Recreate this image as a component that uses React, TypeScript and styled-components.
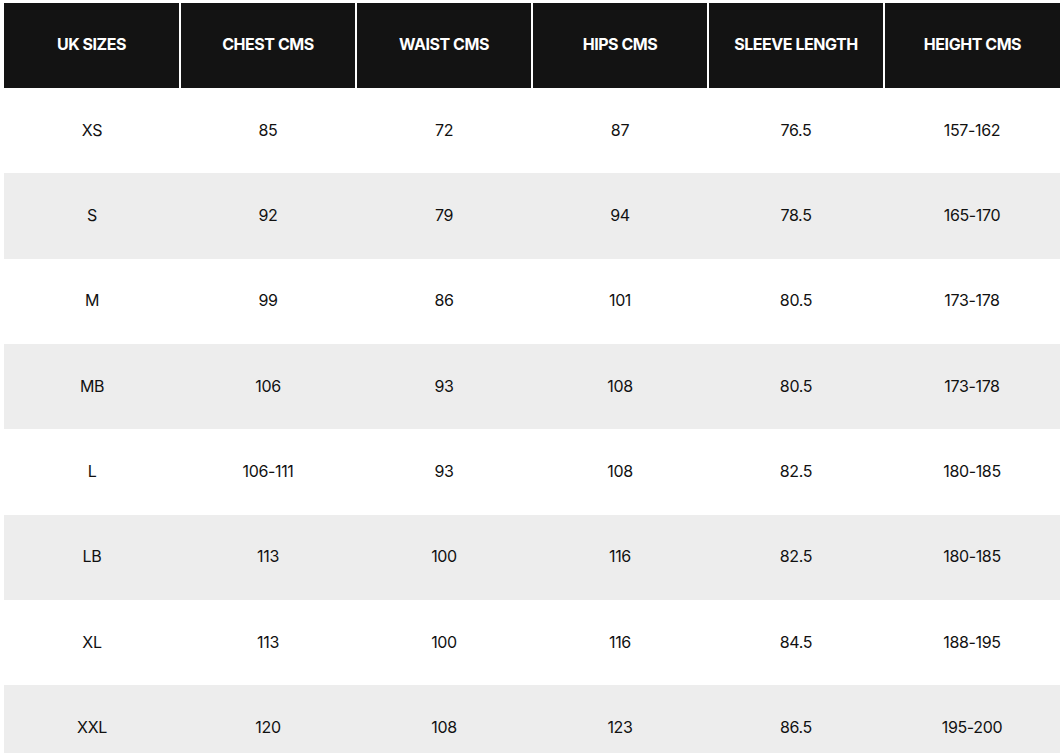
import React from "react";
import styled, { createGlobalStyle } from "styled-components";

const GlobalStyle = createGlobalStyle`
  html, body { margin: 0; padding: 0; background: #ffffff; }
  body { font-family: Inter, "Noto Sans", sans-serif; }
`;

const Wrapper = styled.div`
  padding: 3px 2px 0 4px;
  width: 1056px;
`;

const HeadRow = styled.div`
  display: grid;
  grid-template-columns: 175px 174px 174px 174px 174px 175px;
  column-gap: 2px;
  height: 85px;
`;

const HeadCell = styled.div`
  display: flex;
  align-items: center;
  justify-content: center;
  padding-bottom: 3px;
  background: #131313;
  color: #ffffff;
  font-family: Inter, sans-serif;
  font-weight: 700;
  font-size: 16px;
  letter-spacing: -0.45px;
`;

const BodyRow = styled.div<{ $shade: boolean }>`
  display: grid;
  grid-template-columns: repeat(6, 176px);
  height: 85.33px;
  background: ${(p) => (p.$shade ? "#ededed" : "#ffffff")};
`;

const Cell = styled.div`
  display: flex;
  align-items: center;
  justify-content: center;
  padding-bottom: 2px;
  color: #111111;
  font-family: Inter, sans-serif;
  font-weight: 400;
  font-size: 16px;
  letter-spacing: -0.35px;
`;

const headers = ["UK SIZES", "CHEST CMS", "WAIST CMS", "HIPS CMS", "SLEEVE LENGTH", "HEIGHT CMS"];

const rows = [
  ["XS", "85", "72", "87", "76.5", "157-162"],
  ["S", "92", "79", "94", "78.5", "165-170"],
  ["M", "99", "86", "101", "80.5", "173-178"],
  ["MB", "106", "93", "108", "80.5", "173-178"],
  ["L", "106-111", "93", "108", "82.5", "180-185"],
  ["LB", "113", "100", "116", "82.5", "180-185"],
  ["XL", "113", "100", "116", "84.5", "188-195"],
  ["XXL", "120", "108", "123", "86.5", "195-200"],
];

export default function App() {
  return (
    <>
      <GlobalStyle />
      <Wrapper>
        <HeadRow>
          {headers.map((h) => (
            <HeadCell key={h}>{h}</HeadCell>
          ))}
        </HeadRow>
        {rows.map((r, ri) => (
          <BodyRow key={r[0]} $shade={ri % 2 === 1}>
            {r.map((c, ci) => (
              <Cell key={ci}>{c}</Cell>
            ))}
          </BodyRow>
        ))}
      </Wrapper>
    </>
  );
}
